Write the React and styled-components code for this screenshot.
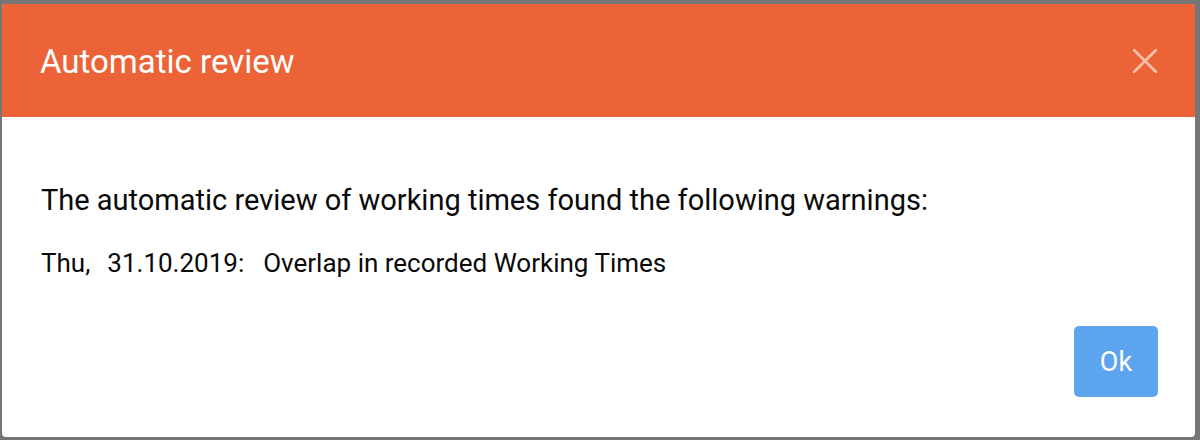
import React from "react";
import styled, { createGlobalStyle } from "styled-components";

const Global = createGlobalStyle`
  html, body { margin: 0; padding: 0; }
  body {
    background: #767676;
    font-family: Roboto, "Liberation Sans", Arial, sans-serif;
    width: 1200px;
    height: 440px;
    overflow: hidden;
  }
`;

const Backdrop = styled.div`
  width: 1200px;
  height: 440px;
  box-sizing: border-box;
  padding: 4px 5px 3px 2px;
  background: #767676;
`;

const Modal = styled.div`
  height: 100%;
  background: #fff;
  border-radius: 4px;
  overflow: hidden;
  display: flex;
  flex-direction: column;
`;

const Header = styled.div`
  height: 113px;
  flex: none;
  background: #ec6338;
  display: flex;
  align-items: center;
  justify-content: space-between;
  padding: 0 38px 0 38px;
`;

const Title = styled.h1`
  margin: 0;
  color: #fff;
  font-size: 33px;
  line-height: 40px;
  font-weight: 400;
  padding-top: 2px;
`;

const Close = styled.button`
  border: none;
  background: none;
  padding: 0;
  width: 24px;
  height: 24px;
  display: flex;
  align-items: center;
  justify-content: center;
  cursor: pointer;
`;

const Body = styled.div`
  flex: 1;
  display: flex;
  flex-direction: column;
  padding: 66px 37px 40px 39px;
`;

const Lead = styled.p`
  margin: 0;
  font-size: 29px;
  line-height: 34px;
  color: #0a0a0a;
`;

const Warning = styled.div`
  margin-top: 31px;
  font-size: 26px;
  line-height: 30px;
  color: #0a0a0a;
  display: flex;
`;

const Cell = styled.span`
  margin-right: ${(p) => p.$gap}px;
`;

const Footer = styled.div`
  margin-top: auto;
  display: flex;
  justify-content: flex-end;
`;

const OkButton = styled.button`
  width: 84px;
  height: 71px;
  border: none;
  border-radius: 5px;
  background: #5ca5ee;
  color: #fff;
  font-family: inherit;
  font-size: 27px;
  cursor: pointer;
`;

export default function App() {
  return (
    <>
      <Global />
      <Backdrop>
        <Modal>
          <Header>
            <Title>Automatic review</Title>
            <Close aria-label="close">
              <svg width="24" height="24" viewBox="0 0 24 24">
                <path
                  d="M1 1 L23 23 M23 1 L1 23"
                  stroke="#f7c2ac"
                  strokeWidth="2.6"
                  strokeLinecap="round"
                />
              </svg>
            </Close>
          </Header>
          <Body>
            <Lead>The automatic review of working times found the following warnings:</Lead>
            <Warning>
              <Cell $gap={17}>Thu,</Cell>
              <Cell $gap={19}>31.10.2019:</Cell>
              <Cell $gap={0}>Overlap in recorded Working Times</Cell>
            </Warning>
            <Footer>
              <OkButton>Ok</OkButton>
            </Footer>
          </Body>
        </Modal>
      </Backdrop>
    </>
  );
}
